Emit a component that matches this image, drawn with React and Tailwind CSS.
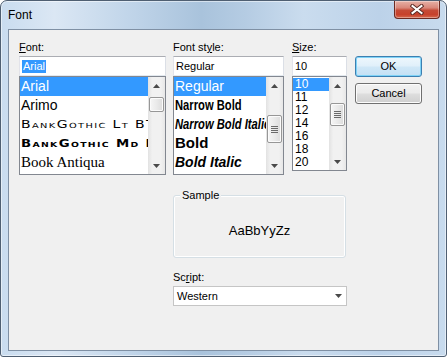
import React from 'react'

// Win7 style "Font" common dialog

function Arrow({ up }) {
  return (
    <svg width="7" height="4" viewBox="0 0 7 4">
      <path d={up ? 'M3.5 0 L7 4 L0 4 Z' : 'M0 0 L7 0 L3.5 4 Z'} fill="#4a4a4a" />
    </svg>
  )
}

function ScrollBar({ thumb, grip }) {
  return (
    <div className="flex w-[17px] shrink-0 flex-col bg-[linear-gradient(90deg,#e2e2e2,#f1f1f1_25%,#f1f1f1_75%,#e7e7e7)]">
      <div className="flex h-[17px] items-center justify-center">
        <Arrow up />
      </div>
      <div className="flex-1">
        <div
          className={`mx-[1px] flex items-center justify-center rounded-[2px] border border-[#979797] bg-[linear-gradient(90deg,#f6f6f6,#eaeaea_50%,#dcdcdc)] shadow-[inset_0_0_0_1px_#fbfbfb] ${thumb}`}
        >
          {grip && (
            <div className="flex flex-col gap-[1px]">
              <span className="block h-[1px] w-[7px] bg-[#6a6a6a]" />
              <span className="block h-[1px] w-[7px] bg-[#6a6a6a]" />
              <span className="block h-[1px] w-[7px] bg-[#6a6a6a]" />
              <span className="block h-[1px] w-[7px] bg-[#6a6a6a]" />
            </div>
          )}
        </div>
      </div>
      <div className="flex h-[17px] items-center justify-center">
        <Arrow />
      </div>
    </div>
  )
}

function Label({ children }) {
  return <div className="h-[13px] text-[11px] leading-[13px] text-black">{children}</div>
}

function TextBox({ children }) {
  return (
    <div className="flex h-[20px] items-center border border-[#abadb3] border-b-[#e3e9ef] border-l-[#e2e3ea] border-r-[#dbdfe6] bg-white pl-[2px] text-[11px] leading-[13px] text-black">
      {children}
    </div>
  )
}

function ListBox({ height, thumb, grip, children }) {
  return (
    <div className={`flex border border-[#828790] bg-white ${height}`}>
      <div className="min-w-0 flex-1 overflow-hidden whitespace-nowrap">{children}</div>
      <ScrollBar thumb={thumb} grip={grip} />
    </div>
  )
}

function Row({ selected, className, children }) {
  return (
    <div
      className={`flex h-[19px] items-center overflow-hidden pl-[1px] ${
        selected ? 'bg-[#3399ff] text-white' : 'text-black'
      } ${className}`}
    >
      {children}
    </div>
  )
}

function CloseButton() {
  return (
    <div className="flex h-[18px] w-[46px] items-center justify-center rounded-b-[4px] border border-t-0 border-[#6b2a22] bg-[linear-gradient(180deg,#e6b1a6_0%,#d9877a_40%,#c54a36_55%,#c7412b_80%,#d56a50_100%)] shadow-[inset_0_0_0_1px_rgba(255,255,255,0.35)]">
      <svg width="14" height="11" viewBox="0 0 14 11">
        <path d="M2.5 2 L11.5 9 M11.5 2 L2.5 9" stroke="#5a2b25" strokeWidth="4" strokeLinecap="square" />
        <path d="M2.5 2 L11.5 9 M11.5 2 L2.5 9" stroke="#ffffff" strokeWidth="2" strokeLinecap="square" />
      </svg>
    </div>
  )
}

const sizes = ['10', '11', '12', '14', '16', '18', '20']

export default function App() {
  return (
    <div className="h-[357px] w-[447px] font-['Liberation_Sans',Arial,sans-serif]">
      <div className="flex h-[357px] w-[447px] flex-col overflow-hidden rounded-t-[7px] rounded-b-[3px] border border-[#4f5f72] bg-[linear-gradient(90deg,#c9dcef_0%,#dbe7f4_12%,#c2d6ea_28%,#a9c3dc_45%,#b5cce3_55%,#cadcee_68%,#bcd2e9_85%,#c8dbee_100%)] shadow-[inset_0_0_0_1px_rgba(255,255,255,0.5)]">
        {/* title bar */}
        <div className="flex h-[28px] shrink-0 items-start justify-between pl-[7px] pr-[6px]">
          <span className="mt-[7px] text-[12px] leading-[14px] text-black">Font</span>
          <CloseButton />
        </div>

        {/* client area */}
        <div className="mx-[7px] h-[322px] shrink-0 border border-[#7f90a4] bg-[#f0f0f0] pl-[10px] pt-[11px]">
          <div className="flex">
            {/* Font */}
            <div className="w-[147px]">
              <Label>
                <span className="underline underline-offset-[1px]">F</span>ont:
              </Label>
              <div className="mt-[2px]">
                <TextBox>
                  <span className="bg-[#3399ff] px-[1px] text-white">Arial</span>
                </TextBox>
              </div>
              <ListBox height="h-[99px]" thumb="mt-[3px] h-[15px]">
                <Row selected className="text-[14px]">Arial</Row>
                <Row className="text-[14px] font-['Arimo','Liberation_Sans',sans-serif]">Arimo</Row>
                <Row className="text-[10px] font-['DejaVu_Sans',sans-serif] [font-variant-caps:small-caps]">
                  <span className="inline-block origin-left scale-x-[1.4] tracking-[1px]">BankGothic Lt BT</span>
                </Row>
                <Row className="text-[10px] font-bold font-['DejaVu_Sans',sans-serif] [font-variant-caps:small-caps]">
                  <span className="inline-block origin-left scale-x-[1.33] tracking-[1px]">BankGothic Md BT</span>
                </Row>
                <Row className="text-[15px] font-['Liberation_Serif',serif]">Book Antiqua</Row>
              </ListBox>
            </div>

            {/* Font style */}
            <div className="ml-[7px] w-[111px]">
              <Label>
                Font st<span className="underline underline-offset-[1px]">y</span>le:
              </Label>
              <div className="mt-[2px]">
                <TextBox>Regular</TextBox>
              </div>
              <ListBox height="h-[99px]" thumb="mt-[21px] h-[28px]" grip>
                <Row selected className="text-[14px]">Regular</Row>
                <Row className="text-[14px] font-bold">
                  <span className="inline-block origin-left scale-x-[0.8]">Narrow Bold</span>
                </Row>
                <Row className="text-[14px] font-bold italic">
                  <span className="inline-block origin-left scale-x-[0.8]">Narrow Bold Italic</span>
                </Row>
                <Row className="text-[15px] font-bold">Bold</Row>
                <Row className="text-[14px] font-bold italic">Bold Italic</Row>
              </ListBox>
            </div>

            {/* Size */}
            <div className="ml-[8px] w-[55px]">
              <Label>
                <span className="underline underline-offset-[1px]">S</span>ize:
              </Label>
              <div className="mt-[2px]">
                <TextBox>10</TextBox>
              </div>
              <ListBox height="h-[95px]" thumb="mt-[9px] h-[23px]" grip>
                <div className="pt-[1px]">
                  {sizes.map((s, i) => (
                    <div
                      key={s}
                      className={`flex h-[13px] items-center pl-[2px] text-[12px] leading-[13px] ${
                        i === 0 ? 'bg-[#3399ff] text-white' : 'text-black'
                      }`}
                    >
                      {s}
                    </div>
                  ))}
                </div>
              </ListBox>
            </div>

            {/* Buttons */}
            <div className="ml-[8px] flex w-[67px] flex-col pt-[15px]">
              <button className="h-[21px] rounded-[3px] border border-[#3c7fb1] bg-[linear-gradient(180deg,#eef7fd_0%,#e1f0fa_45%,#cfe7f7_55%,#c4e0f4_100%)] text-[11px] text-black shadow-[inset_0_0_0_1px_#7fd3f7]">
                OK
              </button>
              <button className="mt-[6px] h-[21px] rounded-[3px] border border-[#707070] bg-[linear-gradient(180deg,#f2f2f2_0%,#ebebeb_45%,#dddddd_55%,#cfcfcf_100%)] text-[11px] text-black shadow-[inset_0_0_0_1px_#fcfcfc]">
                Cancel
              </button>
            </div>
          </div>

          {/* Sample + Script */}
          <div className="ml-[154px] w-[174px]">
            <div className="relative mt-[20px] h-[63px] w-[173px] rounded-[3px] border border-[#d5dfe5] shadow-[inset_0_0_0_1px_#ffffff]">
              <span className="absolute -top-[7px] left-[6px] bg-[#f0f0f0] px-[2px] text-[11px] leading-[13px] text-black">
                Sample
              </span>
              <div className="mt-[27px] text-center text-[13px] leading-[15px] text-black">AaBbYyZz</div>
            </div>
            <div className="mt-[13px]">
              <Label>
                Sc<span className="underline underline-offset-[1px]">r</span>ipt:
              </Label>
            </div>
            <div className="mt-[2px] flex h-[20px] items-center justify-between border border-[#c5c5c5] bg-white pl-[3px] pr-[4px] text-[11px] text-black">
              <span>Western</span>
              <Arrow />
            </div>
          </div>
        </div>
      </div>
    </div>
  )
}
